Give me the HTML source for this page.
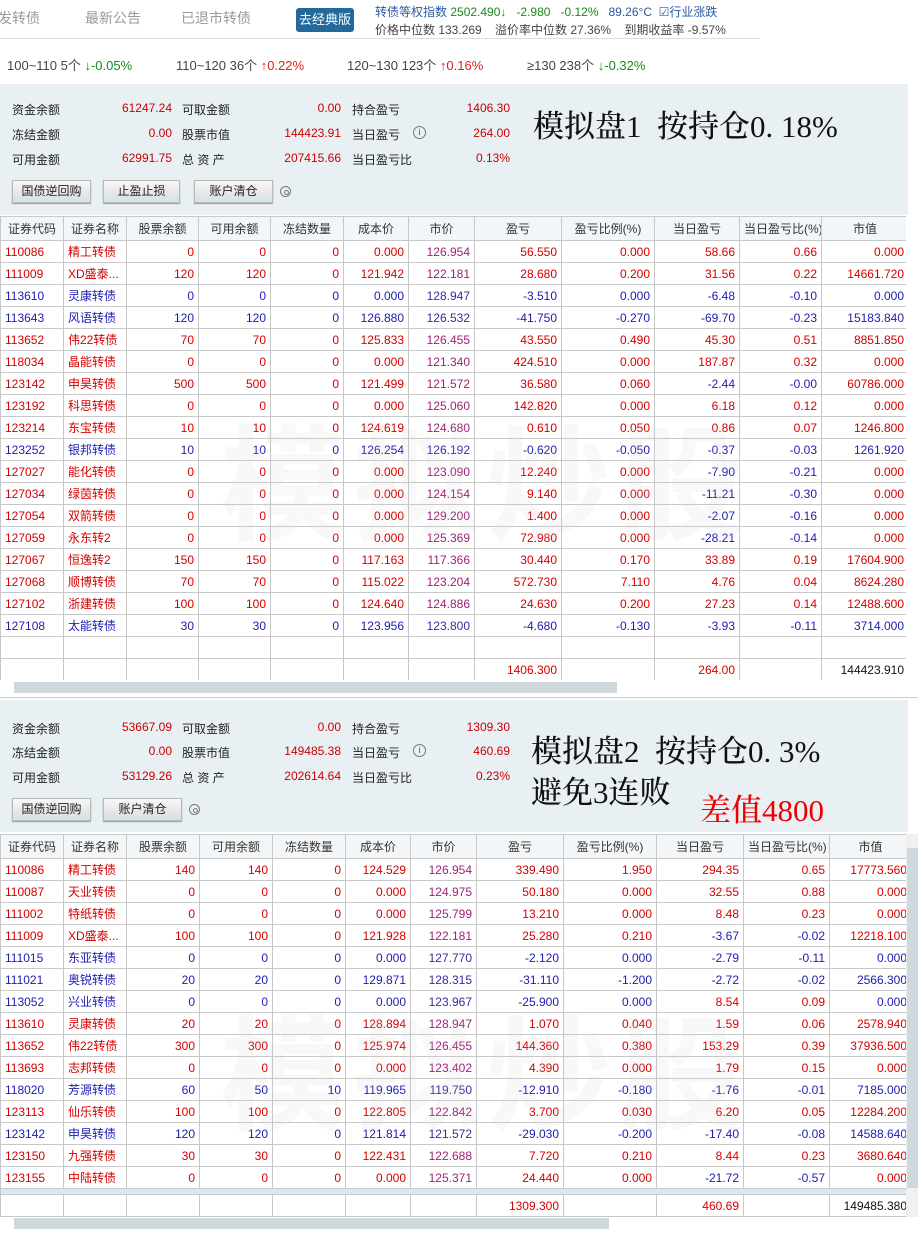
<!DOCTYPE html>
<html><head><meta charset="utf-8">
<style>
*{margin:0;padding:0;box-sizing:border-box}
body{width:918px;height:1249px;overflow:hidden;background:#fff;font-family:"Liberation Sans","Noto Sans CJK SC",sans-serif;font-size:12px;color:#333;position:relative}
.a{position:absolute;white-space:nowrap}
.nav{font-size:14px;color:#999;top:8px}
.btnc{left:296px;top:8px;width:58px;height:24px;background:#236a9b;color:#fff;border-radius:3px;font-size:13px;text-align:center;line-height:24px}
.g{color:#1a8a1a}.rd{color:#e02020}.bl{color:#2a5aa0}
.panel{position:absolute;left:0;width:908px;background:#e9f0f4}
.lab{font-size:12px;color:#222}
.val{font-size:12px;color:#c00;text-align:right}
.btn{position:absolute;height:23px;background:linear-gradient(#f8f8f8,#e6e6e6 60%,#cfe3ee);border:1px solid #b8b8b8;box-shadow:0 1px 1px #999;font-size:12px;text-align:center;line-height:21px;color:#222}
.big{position:absolute;font-family:"Liberation Serif","Noto Serif CJK SC",serif;font-size:31px;color:#111;white-space:nowrap;font-weight:500}
.info{position:absolute;width:13px;height:13px;border:1px solid #777;border-radius:50%;font-size:9px;line-height:11px;text-align:center;color:#555}
.gear{position:absolute;width:11px;height:11px;border:1px solid #777;border-radius:50%}
.gear:after{content:"";position:absolute;left:3px;top:3px;width:3px;height:3px;border:1px solid #777;border-radius:50%}
table{border-collapse:collapse;table-layout:fixed;font-size:12px}
td,th{border:1px solid #c8c8c8;height:22px;padding:0 4px;text-align:right;overflow:hidden;white-space:nowrap}
th{font-weight:normal;text-align:center;background:#f3f6f8;color:#333;height:24px}
td:nth-child(1),td:nth-child(2){text-align:left}
tr.r td{color:#d40000}
tr.b td{color:#1c1cb0}
tr.r td:nth-child(7){color:#a0207a}
tr.b td:nth-child(7){color:#3a2aa0}
td.p{color:#d40000!important}
td.n{color:#1c1cb0!important}
tr.t td{color:#d40000}
.wm{position:absolute;font-size:125px;font-weight:bold;color:rgba(200,200,200,0.13);letter-spacing:8px;white-space:nowrap}
.sb{position:absolute;height:11px;background:#cfd8dc}
</style></head><body>

<div class="a nav" style="left:-2px">发转债</div>
<div class="a nav" style="left:85px">最新公告</div>
<div class="a nav" style="left:181px">已退市转债</div>
<div class="a btnc">去经典版</div>
<div class="a bl" style="left:375px;top:3px;font-size:12px">转债等权指数 <span class="g">2502.490↓</span> &nbsp;&nbsp;<span class="g">-2.980</span> &nbsp;&nbsp;<span class="g">-0.12%</span> &nbsp;&nbsp;89.26°C &nbsp;☑行业涨跌</div>
<div class="a" style="left:375px;top:21px;font-size:12px;color:#444">价格中位数 133.269 &nbsp;&nbsp;&nbsp;溢价率中位数 27.36% &nbsp;&nbsp;&nbsp;到期收益率 -9.57%</div>
<div class="a" style="left:0;top:38px;width:760px;height:1px;background:#ddd"></div>
<div class="a" style="left:7px;top:55px;font-size:13px;color:#444">100~110 5个 <span class="g">↓-0.05%</span></div>
<div class="a" style="left:176px;top:55px;font-size:13px;color:#444">110~120 36个 <span class="rd">↑0.22%</span></div>
<div class="a" style="left:347px;top:55px;font-size:13px;color:#444">120~130 123个 <span class="rd">↑0.16%</span></div>
<div class="a" style="left:527px;top:55px;font-size:13px;color:#444">≥130 238个 <span class="g">↓-0.32%</span></div>

<!-- panel 1 -->
<div class="panel" style="top:84px;height:131px"></div>
<div class="a lab" style="left:12px;top:101px">资金余额</div><div class="a val" style="left:100px;top:101px;width:72px">61247.24</div>
<div class="a lab" style="left:182px;top:101px">可取金额</div><div class="a val" style="left:270px;top:101px;width:71px">0.00</div>
<div class="a lab" style="left:352px;top:101px">持合盈亏</div><div class="a val" style="left:440px;top:101px;width:70px">1406.30</div>
<div class="a lab" style="left:12px;top:126px">冻结金额</div><div class="a val" style="left:100px;top:126px;width:72px">0.00</div>
<div class="a lab" style="left:182px;top:126px">股票市值</div><div class="a val" style="left:260px;top:126px;width:81px">144423.91</div>
<div class="a lab" style="left:352px;top:126px">当日盈亏</div><div class="info" style="left:413px;top:126px">i</div><div class="a val" style="left:440px;top:126px;width:70px">264.00</div>
<div class="a lab" style="left:12px;top:151px">可用金额</div><div class="a val" style="left:100px;top:151px;width:72px">62991.75</div>
<div class="a lab" style="left:182px;top:151px">总 资 产</div><div class="a val" style="left:260px;top:151px;width:81px">207415.66</div>
<div class="a lab" style="left:352px;top:151px">当日盈亏比</div><div class="a val" style="left:440px;top:151px;width:70px">0.13%</div>
<div class="big" style="left:533px;top:101px">模拟盘1&nbsp;&nbsp;按持仓0.&nbsp;18%</div>
<div class="btn" style="left:12px;top:180px;width:79px">国债逆回购</div>
<div class="btn" style="left:103px;top:180px;width:77px">止盈止损</div>
<div class="btn" style="left:194px;top:180px;width:79px">账户清仓</div>
<div class="gear" style="left:280px;top:186px"></div>

<div class="a" style="left:0;top:216px;width:906px;height:464px;overflow:hidden">
<table style="width:906px">
<colgroup><col style="width:63px"><col style="width:63px"><col style="width:72px"><col style="width:72px"><col style="width:73px"><col style="width:65px"><col style="width:66px"><col style="width:87px"><col style="width:93px"><col style="width:85px"><col style="width:82px"><col style="width:87px"></colgroup>
<tr><th>证券代码</th><th>证券名称</th><th>股票余额</th><th>可用余额</th><th>冻结数量</th><th>成本价</th><th>市价</th><th>盈亏</th><th>盈亏比例(%)</th><th>当日盈亏</th><th>当日盈亏比(%)</th><th>市值</th></tr>
<tr class="r"><td>110086</td><td>精工转债</td><td>0</td><td>0</td><td>0</td><td>0.000</td><td>126.954</td><td>56.550</td><td>0.000</td><td class="p">58.66</td><td class="p">0.66</td><td>0.000</td></tr>
<tr class="r"><td>111009</td><td>XD盛泰...</td><td>120</td><td>120</td><td>0</td><td>121.942</td><td>122.181</td><td>28.680</td><td>0.200</td><td class="p">31.56</td><td class="p">0.22</td><td>14661.720</td></tr>
<tr class="b"><td>113610</td><td>灵康转债</td><td>0</td><td>0</td><td>0</td><td>0.000</td><td>128.947</td><td>-3.510</td><td>0.000</td><td class="n">-6.48</td><td class="n">-0.10</td><td>0.000</td></tr>
<tr class="b"><td>113643</td><td>风语转债</td><td>120</td><td>120</td><td>0</td><td>126.880</td><td>126.532</td><td>-41.750</td><td>-0.270</td><td class="n">-69.70</td><td class="n">-0.23</td><td>15183.840</td></tr>
<tr class="r"><td>113652</td><td>伟22转债</td><td>70</td><td>70</td><td>0</td><td>125.833</td><td>126.455</td><td>43.550</td><td>0.490</td><td class="p">45.30</td><td class="p">0.51</td><td>8851.850</td></tr>
<tr class="r"><td>118034</td><td>晶能转债</td><td>0</td><td>0</td><td>0</td><td>0.000</td><td>121.340</td><td>424.510</td><td>0.000</td><td class="p">187.87</td><td class="p">0.32</td><td>0.000</td></tr>
<tr class="r"><td>123142</td><td>申昊转债</td><td>500</td><td>500</td><td>0</td><td>121.499</td><td>121.572</td><td>36.580</td><td>0.060</td><td class="n">-2.44</td><td class="n">-0.00</td><td>60786.000</td></tr>
<tr class="r"><td>123192</td><td>科思转债</td><td>0</td><td>0</td><td>0</td><td>0.000</td><td>125.060</td><td>142.820</td><td>0.000</td><td class="p">6.18</td><td class="p">0.12</td><td>0.000</td></tr>
<tr class="r"><td>123214</td><td>东宝转债</td><td>10</td><td>10</td><td>0</td><td>124.619</td><td>124.680</td><td>0.610</td><td>0.050</td><td class="p">0.86</td><td class="p">0.07</td><td>1246.800</td></tr>
<tr class="b"><td>123252</td><td>银邦转债</td><td>10</td><td>10</td><td>0</td><td>126.254</td><td>126.192</td><td>-0.620</td><td>-0.050</td><td class="n">-0.37</td><td class="n">-0.03</td><td>1261.920</td></tr>
<tr class="r"><td>127027</td><td>能化转债</td><td>0</td><td>0</td><td>0</td><td>0.000</td><td>123.090</td><td>12.240</td><td>0.000</td><td class="n">-7.90</td><td class="n">-0.21</td><td>0.000</td></tr>
<tr class="r"><td>127034</td><td>绿茵转债</td><td>0</td><td>0</td><td>0</td><td>0.000</td><td>124.154</td><td>9.140</td><td>0.000</td><td class="n">-11.21</td><td class="n">-0.30</td><td>0.000</td></tr>
<tr class="r"><td>127054</td><td>双箭转债</td><td>0</td><td>0</td><td>0</td><td>0.000</td><td>129.200</td><td>1.400</td><td>0.000</td><td class="n">-2.07</td><td class="n">-0.16</td><td>0.000</td></tr>
<tr class="r"><td>127059</td><td>永东转2</td><td>0</td><td>0</td><td>0</td><td>0.000</td><td>125.369</td><td>72.980</td><td>0.000</td><td class="n">-28.21</td><td class="n">-0.14</td><td>0.000</td></tr>
<tr class="r"><td>127067</td><td>恒逸转2</td><td>150</td><td>150</td><td>0</td><td>117.163</td><td>117.366</td><td>30.440</td><td>0.170</td><td class="p">33.89</td><td class="p">0.19</td><td>17604.900</td></tr>
<tr class="r"><td>127068</td><td>顺博转债</td><td>70</td><td>70</td><td>0</td><td>115.022</td><td>123.204</td><td>572.730</td><td>7.110</td><td class="p">4.76</td><td class="p">0.04</td><td>8624.280</td></tr>
<tr class="r"><td>127102</td><td>浙建转债</td><td>100</td><td>100</td><td>0</td><td>124.640</td><td>124.886</td><td>24.630</td><td>0.200</td><td class="p">27.23</td><td class="p">0.14</td><td>12488.600</td></tr>
<tr class="b"><td>127108</td><td>太能转债</td><td>30</td><td>30</td><td>0</td><td>123.956</td><td>123.800</td><td>-4.680</td><td>-0.130</td><td class="n">-3.93</td><td class="n">-0.11</td><td>3714.000</td></tr>
<tr><td></td><td></td><td></td><td></td><td></td><td></td><td></td><td></td><td></td><td></td><td></td><td></td></tr>
<tr class="t"><td></td><td></td><td></td><td></td><td></td><td></td><td></td><td>1406.300</td><td></td><td>264.00</td><td></td><td style="color:#111">144423.910</td></tr>
</table>
</div>
<div class="sb" style="left:14px;top:682px;width:603px"></div>
<div class="a" style="left:0;top:697px;width:918px;height:1px;background:#ccc"></div>

<div class="wm" style="left:220px;top:385px">模拟炒股</div>

<!-- panel 2 -->
<div class="panel" style="top:700px;height:132px"></div>
<div class="a lab" style="left:12px;top:720px">资金余额</div><div class="a val" style="left:100px;top:720px;width:72px">53667.09</div>
<div class="a lab" style="left:182px;top:720px">可取金额</div><div class="a val" style="left:270px;top:720px;width:71px">0.00</div>
<div class="a lab" style="left:352px;top:720px">持合盈亏</div><div class="a val" style="left:440px;top:720px;width:70px">1309.30</div>
<div class="a lab" style="left:12px;top:744px">冻结金额</div><div class="a val" style="left:100px;top:744px;width:72px">0.00</div>
<div class="a lab" style="left:182px;top:744px">股票市值</div><div class="a val" style="left:260px;top:744px;width:81px">149485.38</div>
<div class="a lab" style="left:352px;top:744px">当日盈亏</div><div class="info" style="left:413px;top:744px">i</div><div class="a val" style="left:440px;top:744px;width:70px">460.69</div>
<div class="a lab" style="left:12px;top:769px">可用金额</div><div class="a val" style="left:100px;top:769px;width:72px">53129.26</div>
<div class="a lab" style="left:182px;top:769px">总 资 产</div><div class="a val" style="left:260px;top:769px;width:81px">202614.64</div>
<div class="a lab" style="left:352px;top:769px">当日盈亏比</div><div class="a val" style="left:440px;top:769px;width:70px">0.23%</div>
<div class="big" style="left:531px;top:726px">模拟盘2&nbsp;&nbsp;按持仓0.&nbsp;3%</div>
<div class="big" style="left:531px;top:767px">避免3连败</div>
<div class="big" style="left:700px;top:785px;color:#e00">差值4800</div>
<div class="btn" style="left:12px;top:798px;width:79px">国债逆回购</div>
<div class="btn" style="left:103px;top:798px;width:79px">账户清仓</div>
<div class="gear" style="left:189px;top:804px"></div>

<div class="a" style="left:0;top:834px;width:906px;height:383px;overflow:hidden">
<table style="width:911px">
<colgroup><col style="width:63px"><col style="width:63px"><col style="width:73px"><col style="width:73px"><col style="width:73px"><col style="width:65px"><col style="width:66px"><col style="width:87px"><col style="width:93px"><col style="width:87px"><col style="width:86px"><col style="width:82px"></colgroup>
<tr><th>证券代码</th><th>证券名称</th><th>股票余额</th><th>可用余额</th><th>冻结数量</th><th>成本价</th><th>市价</th><th>盈亏</th><th>盈亏比例(%)</th><th>当日盈亏</th><th>当日盈亏比(%)</th><th>市值</th></tr>
<tr class="r"><td>110086</td><td>精工转债</td><td>140</td><td>140</td><td>0</td><td>124.529</td><td>126.954</td><td>339.490</td><td>1.950</td><td class="p">294.35</td><td class="p">0.65</td><td>17773.560</td></tr>
<tr class="r"><td>110087</td><td>天业转债</td><td>0</td><td>0</td><td>0</td><td>0.000</td><td>124.975</td><td>50.180</td><td>0.000</td><td class="p">32.55</td><td class="p">0.88</td><td>0.000</td></tr>
<tr class="r"><td>111002</td><td>特纸转债</td><td>0</td><td>0</td><td>0</td><td>0.000</td><td>125.799</td><td>13.210</td><td>0.000</td><td class="p">8.48</td><td class="p">0.23</td><td>0.000</td></tr>
<tr class="r"><td>111009</td><td>XD盛泰...</td><td>100</td><td>100</td><td>0</td><td>121.928</td><td>122.181</td><td>25.280</td><td>0.210</td><td class="n">-3.67</td><td class="n">-0.02</td><td>12218.100</td></tr>
<tr class="b"><td>111015</td><td>东亚转债</td><td>0</td><td>0</td><td>0</td><td>0.000</td><td>127.770</td><td>-2.120</td><td>0.000</td><td class="n">-2.79</td><td class="n">-0.11</td><td>0.000</td></tr>
<tr class="b"><td>111021</td><td>奥锐转债</td><td>20</td><td>20</td><td>0</td><td>129.871</td><td>128.315</td><td>-31.110</td><td>-1.200</td><td class="n">-2.72</td><td class="n">-0.02</td><td>2566.300</td></tr>
<tr class="b"><td>113052</td><td>兴业转债</td><td>0</td><td>0</td><td>0</td><td>0.000</td><td>123.967</td><td>-25.900</td><td>0.000</td><td class="p">8.54</td><td class="p">0.09</td><td>0.000</td></tr>
<tr class="r"><td>113610</td><td>灵康转债</td><td>20</td><td>20</td><td>0</td><td>128.894</td><td>128.947</td><td>1.070</td><td>0.040</td><td class="p">1.59</td><td class="p">0.06</td><td>2578.940</td></tr>
<tr class="r"><td>113652</td><td>伟22转债</td><td>300</td><td>300</td><td>0</td><td>125.974</td><td>126.455</td><td>144.360</td><td>0.380</td><td class="p">153.29</td><td class="p">0.39</td><td>37936.500</td></tr>
<tr class="r"><td>113693</td><td>志邦转债</td><td>0</td><td>0</td><td>0</td><td>0.000</td><td>123.402</td><td>4.390</td><td>0.000</td><td class="p">1.79</td><td class="p">0.15</td><td>0.000</td></tr>
<tr class="b"><td>118020</td><td>芳源转债</td><td>60</td><td>50</td><td>10</td><td>119.965</td><td>119.750</td><td>-12.910</td><td>-0.180</td><td class="n">-1.76</td><td class="n">-0.01</td><td>7185.000</td></tr>
<tr class="r"><td>123113</td><td>仙乐转债</td><td>100</td><td>100</td><td>0</td><td>122.805</td><td>122.842</td><td>3.700</td><td>0.030</td><td class="p">6.20</td><td class="p">0.05</td><td>12284.200</td></tr>
<tr class="b"><td>123142</td><td>申昊转债</td><td>120</td><td>120</td><td>0</td><td>121.814</td><td>121.572</td><td>-29.030</td><td>-0.200</td><td class="n">-17.40</td><td class="n">-0.08</td><td>14588.640</td></tr>
<tr class="r"><td>123150</td><td>九强转债</td><td>30</td><td>30</td><td>0</td><td>122.431</td><td>122.688</td><td>7.720</td><td>0.210</td><td class="p">8.44</td><td class="p">0.23</td><td>3680.640</td></tr>
<tr class="r"><td>123155</td><td>中陆转债</td><td>0</td><td>0</td><td>0</td><td>0.000</td><td>125.371</td><td>24.440</td><td>0.000</td><td class="n">-21.72</td><td class="n">-0.57</td><td>0.000</td></tr>
<tr><td colspan="12" style="height:6px;background:#d8e9f5;padding:0"></td></tr>
<tr class="t"><td></td><td></td><td></td><td></td><td></td><td></td><td></td><td>1309.300</td><td></td><td>460.69</td><td></td><td style="color:#111">149485.380</td></tr>
</table>
</div>
<div class="a" style="left:906px;top:834px;width:12px;height:383px;background:#f0f0f0"></div>
<div class="a" style="left:907px;top:848px;width:11px;height:340px;background:#cfd8dc"></div>
<div class="sb" style="left:14px;top:1218px;width:595px"></div>

<div class="wm" style="left:220px;top:975px">模拟炒股</div>
</body></html>
